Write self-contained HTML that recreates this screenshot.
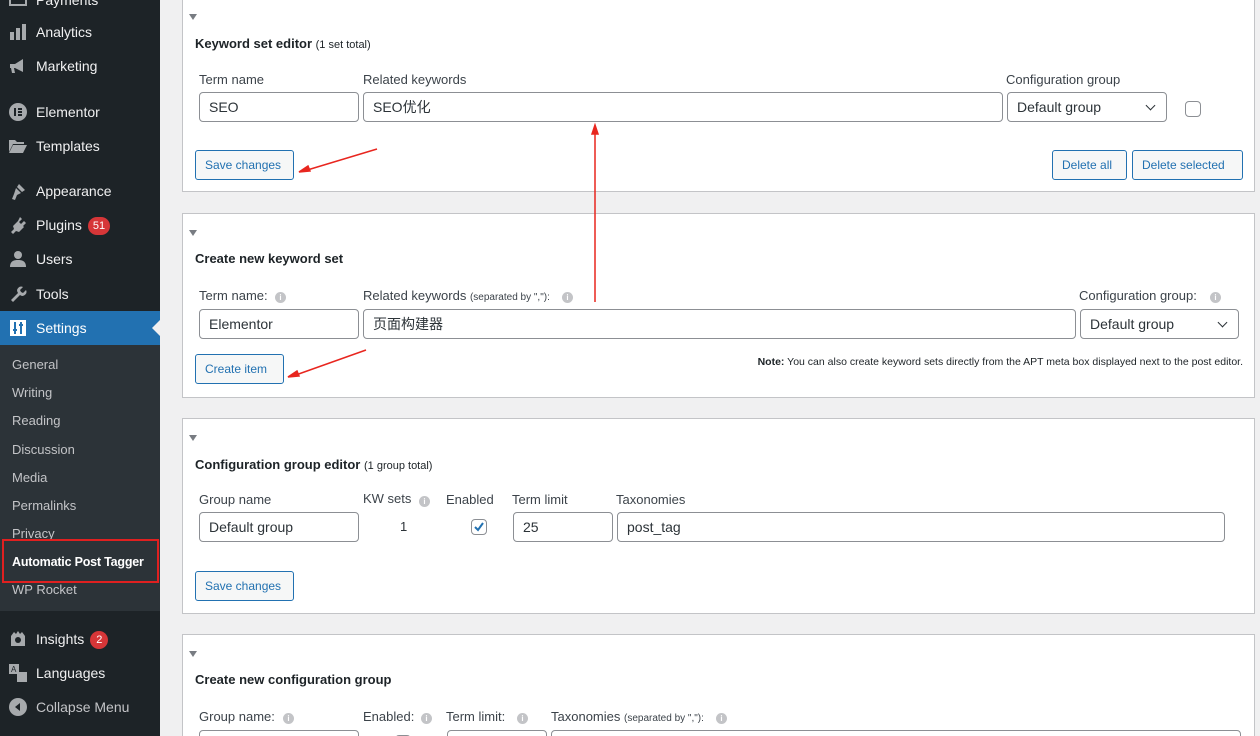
<!DOCTYPE html>
<html><head><meta charset="utf-8">
<style>
*{box-sizing:border-box;margin:0;padding:0}
html,body{width:1260px;height:736px;overflow:hidden}
body{background:#f0f0f1;font-family:"Liberation Sans","Noto Sans CJK SC",sans-serif;color:#1d2327;position:relative;font-size:13px}
.a{position:absolute}
#side{left:0;top:0;width:160px;height:736px;background:#1d2327}
.mi{position:absolute;left:0;width:160px;height:34px;color:#f0f0f1;font-size:14px;line-height:34px;padding-left:36px}
.ic{position:absolute;left:9px;top:8px;width:18px;height:18px}
.sub{position:absolute;left:12px;color:#c3c4c7;font-size:13px;line-height:20px}
.badge{display:inline-block;background:#d63638;color:#fff;border-radius:9px;font-size:11px;line-height:18px;height:18px;min-width:18px;padding:0 5px;text-align:center;margin-left:6px;vertical-align:1px}
.panel{position:absolute;left:182px;width:1073px;background:#fff;border:1px solid #c3c4c7}
.tri{position:absolute;left:6px;width:0;height:0;border-left:4px solid transparent;border-right:4px solid transparent;border-top:6px solid #787c82}
h3{position:absolute;left:12px;font-size:13px;font-weight:bold;color:#1d2327}
h3 span{font-weight:normal;font-size:11px}
.lbl{position:absolute;font-size:13px;color:#3c434a}
.lbl small{font-size:10px}
.inp{position:absolute;height:30px;border:1px solid #8c8f94;border-radius:4px;background:#fff;font-size:14px;line-height:28px;padding-left:9px;color:#2c3338}
.sel::after{content:"";position:absolute;right:12px;top:9px;width:6px;height:6px;border-right:1.5px solid #2c3338;border-bottom:1.5px solid #2c3338;transform:rotate(45deg)}
.btn{position:absolute;height:30px;border:1px solid #2271b1;border-radius:3px;background:#f6f7f7;color:#2271b1;font-size:12px;line-height:28px;padding:0 9px}
.cb{position:absolute;width:16px;height:16px;border:1px solid #8c8f94;border-radius:4px;background:#fff}
.info{position:absolute;width:11px;height:11px;border-radius:50%;background:#c3c4c7;color:#fff;font-size:8px;line-height:11px;text-align:center;font-weight:bold}
</style></head><body>
<div id="side" class="a">
  <div class="mi" style="top:-17px">Payments<svg class="ic" viewBox="0 0 18 18"><rect x="1" y="2" width="16" height="12" fill="none" stroke="#a7aaad" stroke-width="2"/></svg></div>
  <div class="mi" style="top:15px">Analytics<svg class="ic" viewBox="0 0 18 18"><rect x="1" y="9" width="4" height="8" fill="#a7aaad"/><rect x="7" y="5" width="4" height="12" fill="#a7aaad"/><rect x="13" y="1" width="4" height="16" fill="#a7aaad"/></svg></div>
  <div class="mi" style="top:49px">Marketing<svg class="ic" viewBox="0 0 18 18"><path d="M1 7h5l8-5v13l-8-4H5l1 5H3L2 11H1z" fill="#a7aaad"/></svg></div>
  <div class="mi" style="top:95px">Elementor<svg class="ic" viewBox="0 0 18 18"><circle cx="9" cy="9" r="9" fill="#a7aaad"/><rect x="5" y="5" width="2" height="8" fill="#1d2327"/><rect x="9" y="5" width="4" height="2" fill="#1d2327"/><rect x="9" y="8" width="4" height="2" fill="#1d2327"/><rect x="9" y="11" width="4" height="2" fill="#1d2327"/></svg></div>
  <div class="mi" style="top:129px">Templates<svg class="ic" viewBox="0 0 18 18"><path d="M0 3h6l2 2h7v2H4L0 15z M4 8h14l-4 8H0z" fill="#a7aaad"/></svg></div>
  <div class="mi" style="top:174px">Appearance<svg class="ic" viewBox="0 0 18 18"><path d="M10 2l6 6-3 2-5-5zM7 6l5 5-4 2-2 5-3-1 2-5z" fill="#a7aaad"/></svg></div>
  <div class="mi" style="top:208px">Plugins<span class="badge">51</span><svg class="ic" viewBox="0 0 18 18"><path d="M11 1l2 2-3 3 2 2 3-3 2 2-3 3 1 1-5 5-3-1-3 3-2-2 3-3-1-3 5-5z" fill="#a7aaad"/></svg></div>
  <div class="mi" style="top:242px">Users<svg class="ic" viewBox="0 0 18 18"><circle cx="9" cy="5" r="4" fill="#a7aaad"/><path d="M1 17c0-6 4-7 8-7s8 1 8 7z" fill="#a7aaad"/></svg></div>
  <div class="mi" style="top:277px">Tools<svg class="ic" viewBox="0 0 18 18"><path d="M2 15l7-7a4 4 0 015-6l-3 3 1 2 2 1 3-3a4 4 0 01-6 5l-7 7z" fill="#a7aaad"/></svg></div>
  <div class="mi" style="top:311px;background:#2271b1;color:#fff">Settings<svg class="ic" viewBox="0 0 18 18"><rect x="1" y="1" width="16" height="16" fill="#fff"/><path d="M6 3v12M12 3v12M4 11h4M10 6h4" stroke="#2271b1" stroke-width="2"/></svg>
    <div class="a" style="right:0;top:9px;width:0;height:0;border-top:8px solid transparent;border-bottom:8px solid transparent;border-right:8px solid #f0f0f1"></div></div>
  <div class="a" style="left:0;top:345px;width:160px;height:266px;background:#2c3338"></div>
  <div class="sub" style="top:355px">General</div>
  <div class="sub" style="top:383px">Writing</div>
  <div class="sub" style="top:411px">Reading</div>
  <div class="sub" style="top:440px">Discussion</div>
  <div class="sub" style="top:468px">Media</div>
  <div class="sub" style="top:496px">Permalinks</div>
  <div class="sub" style="top:524px">Privacy</div>
  <div class="sub" style="top:552px;color:#fff;font-weight:bold;font-size:12.5px;letter-spacing:-0.2px">Automatic Post Tagger</div>
  <div class="a" style="left:2px;top:539px;width:157px;height:44px;border:2px solid #e02020"></div>
  <div class="sub" style="top:580px">WP Rocket</div>
  <div class="mi" style="top:622px">Insights<span class="badge">2</span><svg class="ic" viewBox="0 0 18 18"><path d="M2 16V6l3-4 2 2 2-3 2 3 2-2 3 4v10z" fill="#a7aaad"/><circle cx="9" cy="10" r="3" fill="#1d2327"/></svg></div>
  <div class="mi" style="top:656px">Languages<svg class="ic" viewBox="0 0 18 18"><rect x="0" y="0" width="10" height="10" fill="#a7aaad"/><rect x="8" y="8" width="10" height="10" fill="#a7aaad"/><text x="2" y="8" font-size="8" fill="#1d2327" font-family="Liberation Sans">A</text></svg></div>
  <div class="mi" style="top:690px;color:#c3c4c7">Collapse Menu<svg class="ic" viewBox="0 0 18 18"><circle cx="9" cy="9" r="9" fill="#a7aaad"/><path d="M11 5v8L6 9z" fill="#1d2327"/></svg></div>
</div>

<div class="panel" style="top:-10px;height:202px">
  <div class="tri" style="top:23px"></div>
  <h3 style="top:45px">Keyword set editor <span>(1 set total)</span></h3>
  <div class="lbl" style="left:16px;top:81px">Term name</div>
  <div class="lbl" style="left:180px;top:81px">Related keywords</div>
  <div class="lbl" style="left:823px;top:81px">Configuration group</div>
  <div class="inp" style="left:16px;top:101px;width:160px">SEO</div>
  <div class="inp" style="left:180px;top:101px;width:640px">SEO优化</div>
  <div class="inp sel" style="left:824px;top:101px;width:160px">Default group</div>
  <div class="cb" style="left:1002px;top:110px"></div>
  <div class="btn" style="left:12px;top:159px;width:99px">Save changes</div>
  <div class="btn" style="left:869px;top:159px;width:75px">Delete all</div>
  <div class="btn" style="left:949px;top:159px;width:111px">Delete selected</div>
</div>

<div class="panel" style="top:213px;height:185px">
  <div class="tri" style="top:16px"></div>
  <h3 style="top:37px">Create new keyword set</h3>
  <div class="lbl" style="left:16px;top:74px">Term name:</div><div class="info" style="left:92px;top:78px">i</div>
  <div class="lbl" style="left:180px;top:74px">Related keywords <small>(separated by ","):</small></div><div class="info" style="left:379px;top:78px">i</div>
  <div class="lbl" style="left:896px;top:74px">Configuration group:</div><div class="info" style="left:1027px;top:78px">i</div>
  <div class="inp" style="left:16px;top:95px;width:160px">Elementor</div>
  <div class="inp" style="left:180px;top:95px;width:713px">页面构建器</div>
  <div class="inp sel" style="left:897px;top:95px;width:159px">Default group</div>
  <div class="btn" style="left:12px;top:140px;width:89px">Create item</div>
  <div class="lbl" style="right:11px;top:142px;font-size:10.5px;color:#1d2327"><b>Note:</b> You can also create keyword sets directly from the APT meta box displayed next to the post editor.</div>
</div>

<div class="panel" style="top:418px;height:196px">
  <div class="tri" style="top:16px"></div>
  <h3 style="top:38px">Configuration group editor <span>(1 group total)</span></h3>
  <div class="lbl" style="left:16px;top:73px">Group name</div>
  <div class="lbl" style="left:180px;top:72px">KW sets</div><div class="info" style="left:236px;top:77px">i</div>
  <div class="lbl" style="left:263px;top:73px">Enabled</div>
  <div class="lbl" style="left:329px;top:73px">Term limit</div>
  <div class="lbl" style="left:433px;top:73px">Taxonomies</div>
  <div class="inp" style="left:16px;top:93px;width:160px">Default group</div>
  <div class="lbl" style="left:217px;top:100px;color:#2c3338">1</div>
  <div class="cb" style="left:288px;top:100px"><svg class="a" style="left:1px;top:1px" width="12" height="12" viewBox="0 0 12 12"><path d="M2 6l3 3 5-7" fill="none" stroke="#2271b1" stroke-width="2"/></svg></div>
  <div class="inp" style="left:330px;top:93px;width:100px">25</div>
  <div class="inp" style="left:434px;top:93px;width:608px">post_tag</div>
  <div class="btn" style="left:12px;top:152px;width:99px">Save changes</div>
</div>

<div class="panel" style="top:634px;height:120px">
  <div class="tri" style="top:16px"></div>
  <h3 style="top:37px">Create new configuration group</h3>
  <div class="lbl" style="left:16px;top:74px">Group name:</div><div class="info" style="left:100px;top:78px">i</div>
  <div class="lbl" style="left:180px;top:74px">Enabled:</div><div class="info" style="left:238px;top:78px">i</div>
  <div class="lbl" style="left:263px;top:74px">Term limit:</div><div class="info" style="left:334px;top:78px">i</div>
  <div class="lbl" style="left:368px;top:74px">Taxonomies <small>(separated by ","):</small></div><div class="info" style="left:533px;top:78px">i</div>
  <div class="inp" style="left:16px;top:95px;width:160px"></div>
  <div class="cb" style="left:212px;top:100px"></div>
  <div class="inp" style="left:264px;top:95px;width:100px"></div>
  <div class="inp" style="left:368px;top:95px;width:690px"></div>
</div>

<svg class="a" style="left:0;top:0" width="1260" height="736">
  <g stroke="#e8261f" stroke-width="1.5" fill="#e8261f">
    <line x1="377" y1="149" x2="304" y2="171"/><path d="M299 172l9-6 2 5z" />
    <line x1="595" y1="302" x2="595" y2="132"/><path d="M595 125l-3 9h6z"/>
    <line x1="366" y1="350" x2="293" y2="376"/><path d="M288 377l9-6 2 5z"/>
  </g>
</svg>
</body></html>
